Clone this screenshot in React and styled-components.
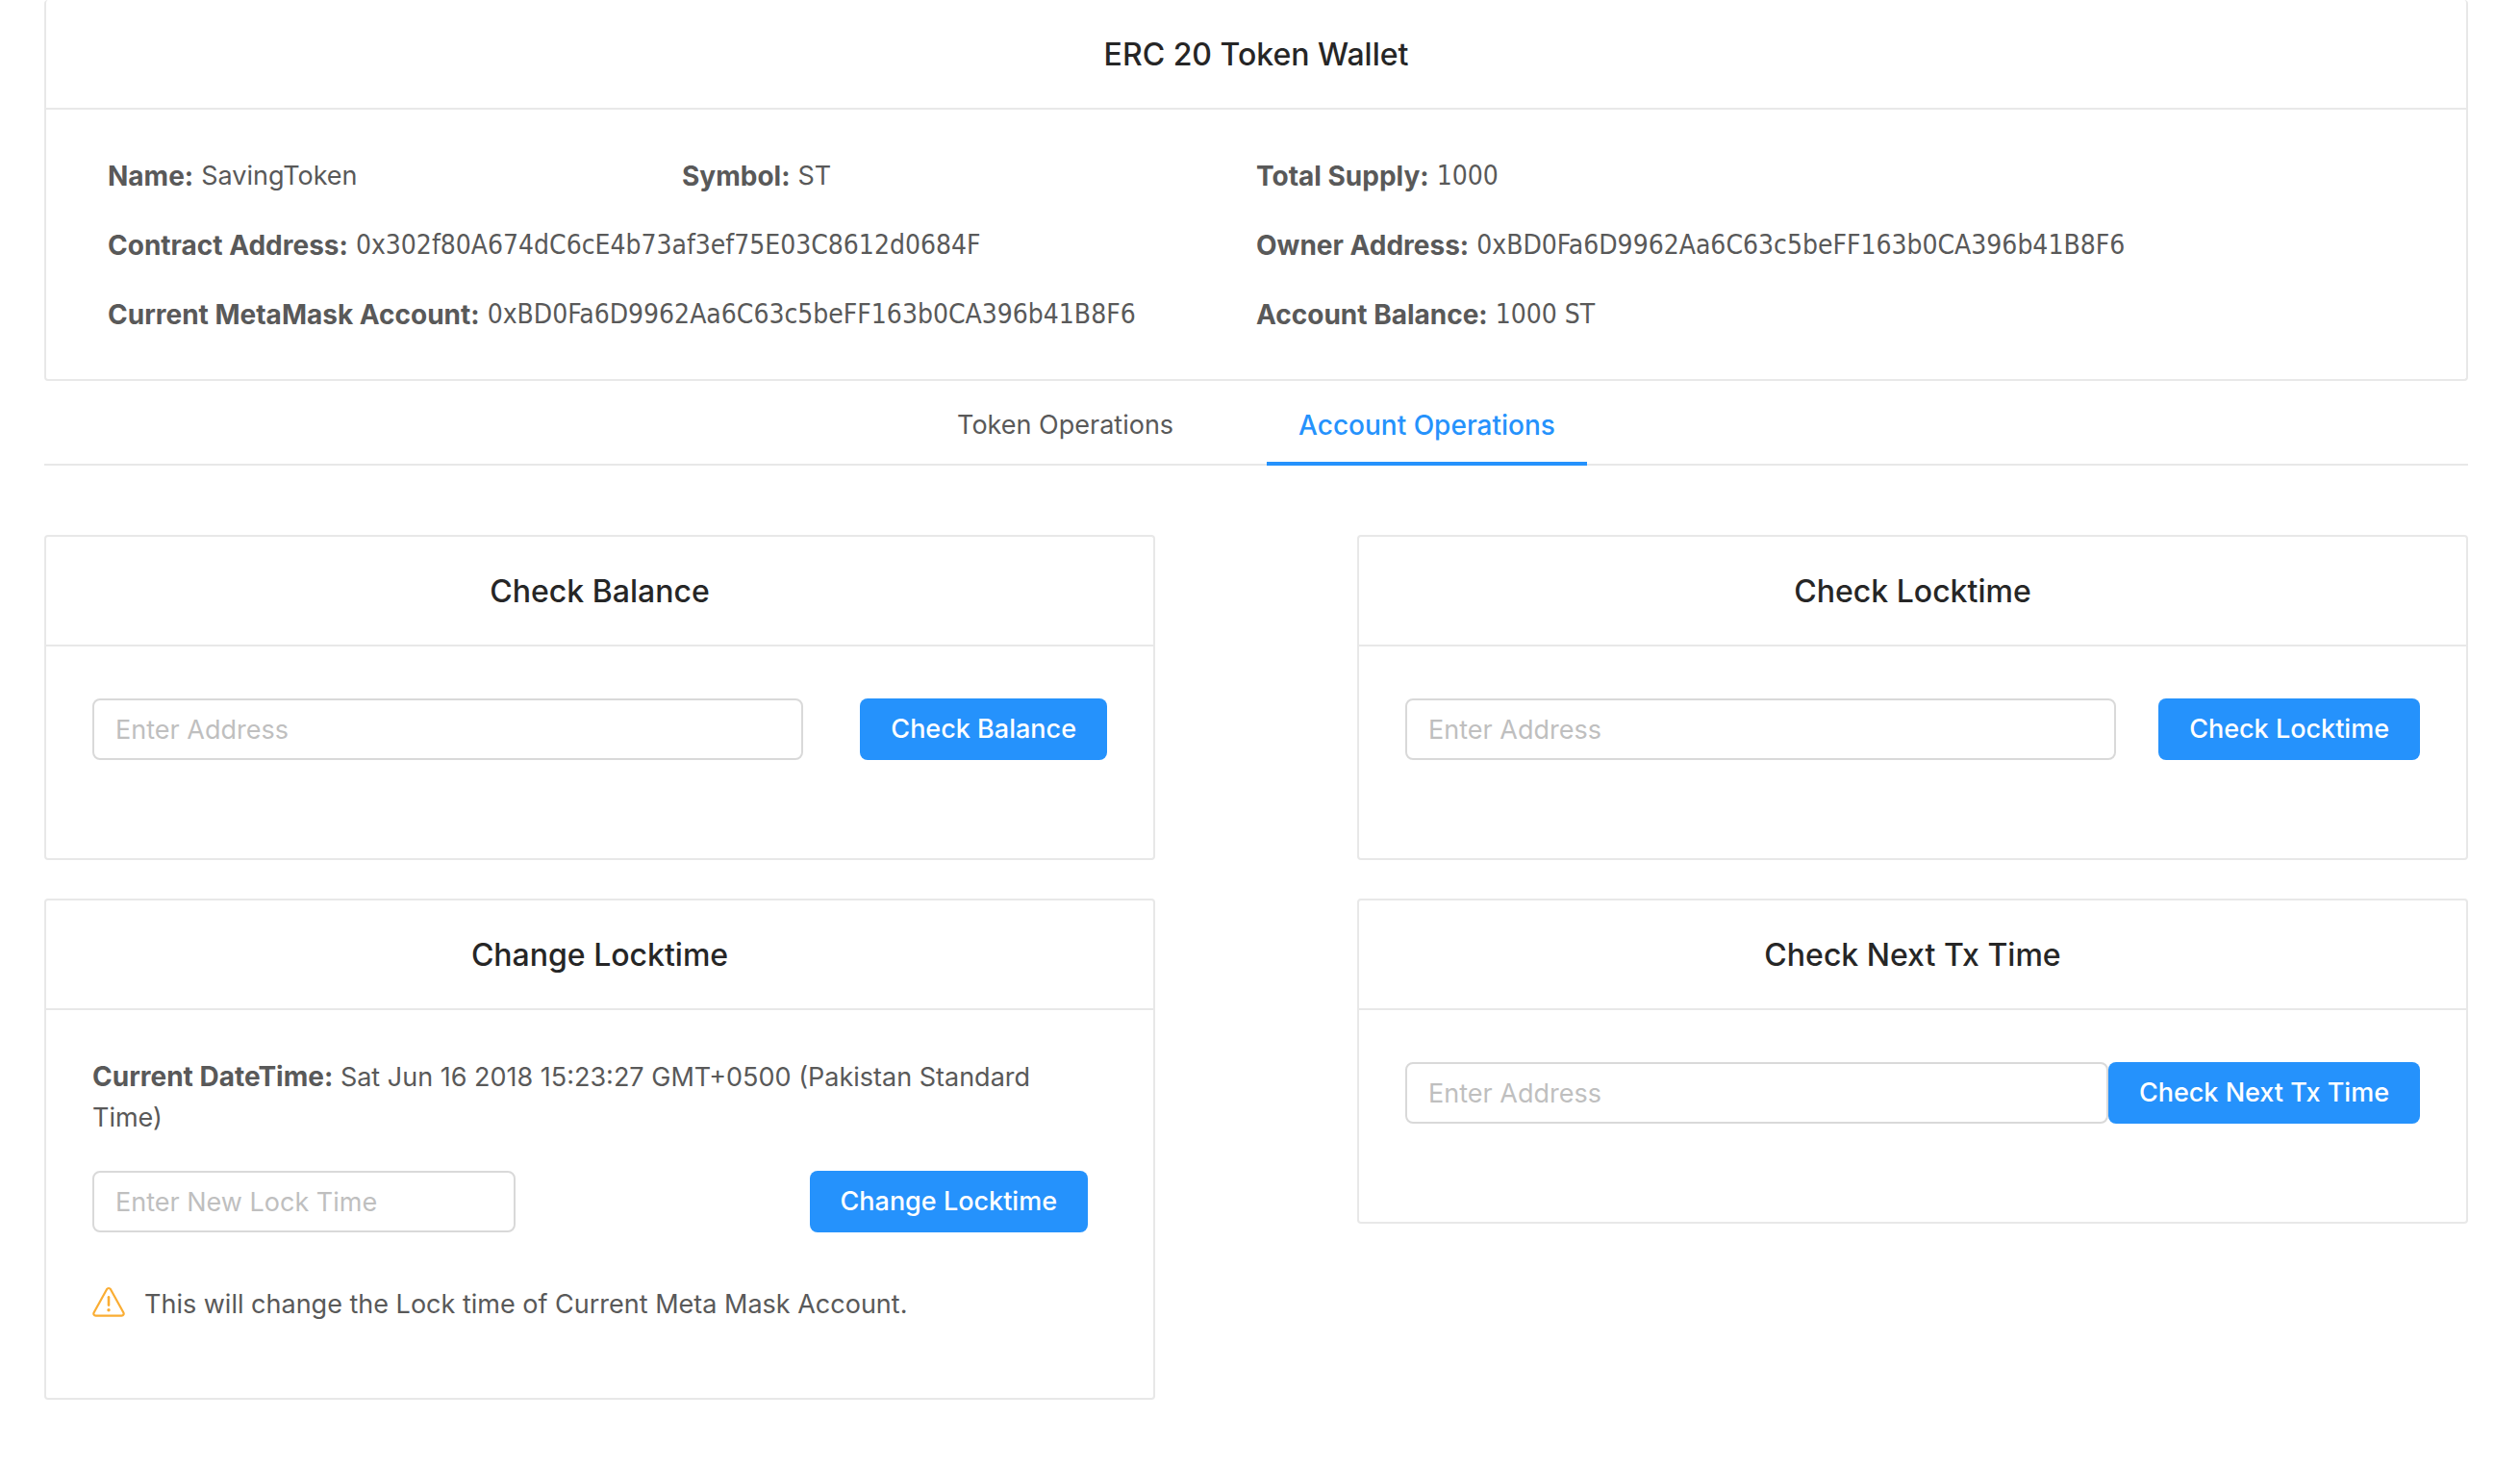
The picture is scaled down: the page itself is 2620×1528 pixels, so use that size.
import React, { useState } from 'react';
import styled, { createGlobalStyle } from 'styled-components';

const color = {
  primary: '#2592fc',
  heading: '#262626',
  text: '#595959',
  placeholder: '#bfbfbf',
  line: '#e8e8e8',
  field: '#d9d9d9',
  warning: '#faad33',
};

const GlobalStyle = createGlobalStyle`
  *, *::before, *::after { box-sizing: border-box; }
  body {
    margin: 0;
    background: #fff;
    color: ${color.text};
    font-family: Inter, "Liberation Sans", sans-serif;
    font-size: 27px;
    line-height: 42px;
  }
`;

const Page = styled.main`
  padding: 0 54px 72px 46px;
`;

const CardBox = styled.section`
  border: 2px solid ${color.line};
  border-top-width: ${(p) => (p.$flush ? 0 : 2)}px;
  border-radius: 4px;
`;

const CardHeader = styled.header`
  padding: 36px 48px 34px;
  border-bottom: 2px solid ${color.line};
  text-align: center;
`;

const CardTitle = styled.h2`
  margin: 0;
  color: ${color.heading};
  font-size: 32px;
  font-weight: 500;
  line-height: 42px;
`;

const CardBody = styled.div`
  padding: 48px;
`;

const Details = styled.dl`
  display: grid;
  grid-template-columns: repeat(4, minmax(0, 1fr));
  row-gap: 30px;
  margin: 0;
  padding: 48px 64px 46px;
`;

const Detail = styled.div`
  display: flex;
  gap: 8px;
  grid-column: span ${(p) => p.$span};
  white-space: nowrap;
`;

const Label = styled.dt`
  font-size: 28px;
  font-weight: 700;
`;

const Value = styled.dd`
  margin: 0;
  font-family: ${(p) =>
    p.$numeric ? '"DejaVu Sans Condensed", "DejaVu Sans", sans-serif' : 'inherit'};
  font-size: ${(p) => (p.$numeric ? 28 : 27)}px;
`;

const TabBar = styled.div`
  display: flex;
  justify-content: center;
  gap: 64px;
  height: 88px;
  margin-bottom: 72px;
  border-bottom: 2px solid ${color.line};
`;

const Tab = styled.button`
  margin: 0 0 -2px;
  padding: 8px 33px 0;
  border: 0;
  border-bottom: 4px solid ${(p) => (p.$active ? color.primary : 'transparent')};
  background: none;
  color: ${(p) => (p.$active ? color.primary : color.text)};
  font: inherit;
  font-size: ${(p) => (p.$active ? 28 : 27)}px;
  font-weight: ${(p) => (p.$active ? 500 : 400)};
  cursor: pointer;
`;

const Panels = styled.div`
  display: grid;
  grid-template-columns: repeat(2, minmax(0, 1fr));
  gap: 40px calc(100% / 12);
  align-items: start;
`;

const FormRow = styled.form`
  display: flex;
  justify-content: space-between;
  padding: 6px 0 54px;
`;

const LockForm = styled.form`
  padding: 0 20px 28px 0;
`;

const LockRow = styled.div`
  display: flex;
  justify-content: space-between;
  margin: 34px 0 54px;
`;

const DateText = styled.p`
  margin: 0;

  strong {
    font-size: 28px;
    font-weight: 700;
  }
`;

const Field = styled.input`
  flex: 0 1 ${(p) => p.$basis};
  min-width: 0;
  height: 64px;
  padding: 8px 22px;
  border: 2px solid ${color.field};
  border-radius: 8px;
  background: #fff;
  color: ${color.text};
  font: inherit;

  &::placeholder {
    color: ${color.placeholder};
    opacity: 1;
  }
`;

const PrimaryButton = styled.button`
  flex: none;
  height: 64px;
  padding: 0 32px;
  border: 0;
  border-radius: 8px;
  background: ${color.primary};
  color: #fff;
  font: inherit;
  font-weight: 500;
  white-space: nowrap;
  cursor: pointer;
`;

const Note = styled.p`
  display: flex;
  align-items: flex-start;
  gap: 20px;
  margin: 0;
`;

const NoteIcon = styled.svg`
  flex: none;
  width: 34px;
  height: 36px;
`;

function WarningIcon() {
  return (
    <NoteIcon viewBox="0 0 34 36" fill="none" stroke={color.warning} strokeWidth="2.2" aria-hidden="true">
      <path
        strokeLinejoin="round"
        d="M15 5.2 1.7 29.2C.8 31 1.6 32.6 3.6 32.6H30.4C32.4 32.6 33.2 31 32.3 29.2L19 5.2C18 3.6 16 3.6 15 5.2Z"
      />
      <path strokeWidth="2.6" strokeLinecap="round" d="M17 13.2V21.6" />
      <circle cx="17" cy="26.8" r="1.7" fill={color.warning} stroke="none" />
    </NoteIcon>
  );
}

function Card({ title, children }) {
  return (
    <CardBox>
      <CardHeader>
        <CardTitle>{title}</CardTitle>
      </CardHeader>
      <CardBody>{children}</CardBody>
    </CardBox>
  );
}

const stay = (event) => event.preventDefault();

function AddressCard({ title }) {
  return (
    <Card title={title}>
      <FormRow onSubmit={stay}>
        <Field $basis="70%" type="text" placeholder="Enter Address" aria-label={`${title} address`} />
        <PrimaryButton type="submit">{title}</PrimaryButton>
      </FormRow>
    </Card>
  );
}

const details = [
  { label: 'Name:', value: 'SavingToken', span: 1 },
  { label: 'Symbol:', value: 'ST', span: 1 },
  { label: 'Total Supply:', value: '1000', span: 2, numeric: true },
  { label: 'Contract Address:', value: '0x302f80A674dC6cE4b73af3ef75E03C8612d0684F', span: 2, numeric: true },
  { label: 'Owner Address:', value: '0xBD0Fa6D9962Aa6C63c5beFF163b0CA396b41B8F6', span: 2, numeric: true },
  { label: 'Current MetaMask Account:', value: '0xBD0Fa6D9962Aa6C63c5beFF163b0CA396b41B8F6', span: 2, numeric: true },
  { label: 'Account Balance:', value: '1000 ST', span: 2, numeric: true },
];

const tabs = ['Token Operations', 'Account Operations'];

export default function App() {
  const [active, setActive] = useState(tabs[1]);

  return (
    <>
      <GlobalStyle />
      <Page>
        <CardBox $flush>
          <CardHeader>
            <CardTitle as="h1">ERC 20 Token Wallet</CardTitle>
          </CardHeader>
          <Details>
            {details.map((d) => (
              <Detail key={d.label} $span={d.span}>
                <Label>{d.label}</Label>
                <Value $numeric={d.numeric}>{d.value}</Value>
              </Detail>
            ))}
          </Details>
        </CardBox>

        <TabBar role="tablist">
          {tabs.map((name) => (
            <Tab
              key={name}
              type="button"
              role="tab"
              aria-selected={active === name}
              $active={active === name}
              onClick={() => setActive(name)}
            >
              {name}
            </Tab>
          ))}
        </TabBar>

        <Panels>
          <AddressCard title="Check Balance" />
          <AddressCard title="Check Locktime" />
          <Card title="Change Locktime">
            <LockForm onSubmit={stay}>
              <DateText>
                <strong>Current DateTime:</strong> Sat Jun 16 2018 15:23:27 GMT+0500 (Pakistan Standard Time)
              </DateText>
              <LockRow>
                <Field $basis="440px" type="text" placeholder="Enter New Lock Time" aria-label="New lock time" />
                <PrimaryButton type="submit">Change Locktime</PrimaryButton>
              </LockRow>
              <Note>
                <WarningIcon />
                This will change the Lock time of Current Meta Mask Account.
              </Note>
            </LockForm>
          </Card>
          <AddressCard title="Check Next Tx Time" />
        </Panels>
      </Page>
    </>
  );
}
